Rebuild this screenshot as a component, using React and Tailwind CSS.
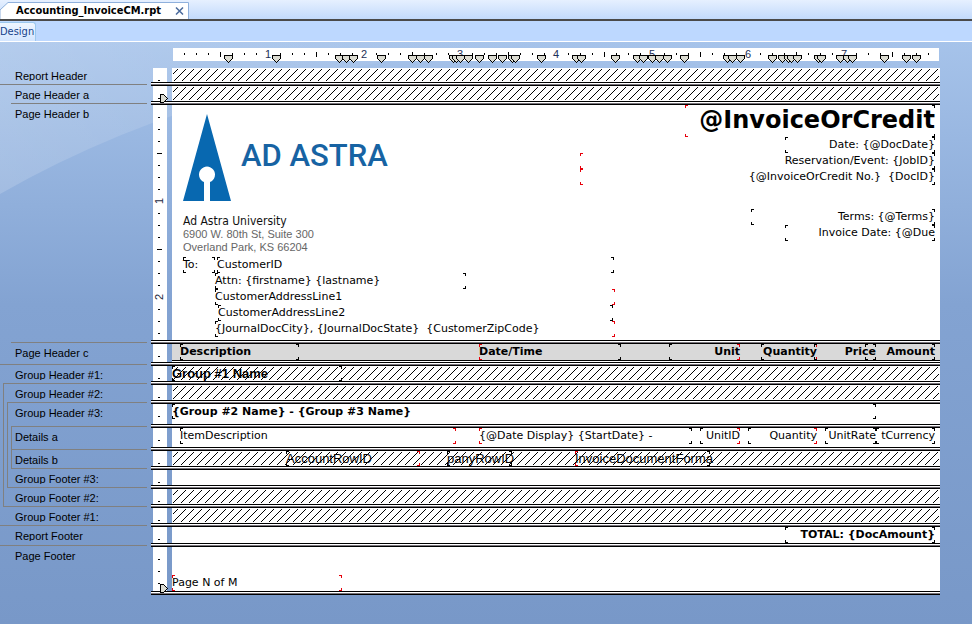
import React from 'react';
import clsx from 'clsx';

const GUIDES = [
  56, 104, 167, 174, 181, 209, 240, 248, 256, 281, 284, 288, 296, 307, 320, 330, 340, 343, 369, 404, 409, 443,
  465, 471, 480, 487, 495, 512, 555, 560, 568, 600, 610, 616, 619, 625, 646, 649, 668, 675, 680, 712, 734, 744,
];

const TopRuler = () => (
  <div className="relative h-[13px] bg-white ml-px mr-px">
    <svg className="absolute top-0 -left-px w-full h-4 overflow-visible" shapeRendering="crispEdges">
      {Array.from({ length: 63 }, (_, i) => i + 1).filter(i => i % 8 !== 0).map(i => (
        <rect key={i} x={i * 12} y={i % 4 === 0 ? 4 : 5} width="1" height={i % 4 === 0 ? 5 : 2} fill="#000" />
      ))}
      {[1, 2, 3, 4, 5, 6, 7].map(n => (
        <text key={n} x={n * 96} y="10" textAnchor="middle" fill="#1c3058" className="text-[11px] font-['Liberation_Sans',sans-serif]">{n}</text>
      ))}
      {GUIDES.map(x => (
        <path key={x} transform={`translate(${x} 7)`} d="M-3.5 .5H4.5V3.5L.5 7.5L-3.5 3.5Z" fill="#dcdcd2" stroke="#000" />
      ))}
    </svg>
  </div>
);

const Ruler = ({ ticks, guide }) => (
  <div className="relative w-[14px] ml-[2px] mr-[5px] bg-white shrink-0">
    <svg className="absolute inset-0 w-full h-full overflow-visible" shapeRendering="crispEdges">
      {Array.from({ length: ticks }, (_, i) => i + 1).map(i => (
        i % 8 === 0
          ? <text key={i} transform={`translate(10 ${i * 12}) rotate(-90)`} textAnchor="middle" fill="#1c2840" className="text-[11px] font-['Liberation_Sans',sans-serif]">{i / 8}</text>
          : <rect key={i} x={i % 4 === 0 ? 4 : 5} y={i * 12} width={i % 4 === 0 ? 5 : 2} height="1" fill="#000" />
      ))}
      {guide && <path transform={`translate(7 ${guide})`} d="M.5 -3.5H3.5L7.5 .5L3.5 4.5H.5Z" fill="#dcdcd2" stroke="#000" />}
    </svg>
  </div>
);

const Hatch = () => (
  <svg className="absolute inset-x-px top-px bottom-px w-[calc(100%-2px)] h-[calc(100%-2px)]" shapeRendering="crispEdges">
    <defs>
      <pattern id="hatch" width="8" height="8" patternUnits="userSpaceOnUse">
        <path fill="#000" d="M0 4h1v1H0zM1 3h1v1H1zM2 2h1v1H2zM3 1h1v1H3zM4 0h1v1H4zM5 7h1v1H5zM6 6h1v1H6zM7 5h1v1H7z" />
      </pattern>
    </defs>
    <rect width="100%" height="100%" fill="url(#hatch)" />
  </svg>
);

// height of the section comes in through className
const Section = ({ className, ticks = 1, guide, hatch, children }) => (
  <>
    <div className={clsx('flex', className)}>
      <Ruler ticks={ticks} guide={guide} />
      <div className="relative flex-1 flex flex-col leading-4 bg-white">
        {hatch && <Hatch />}
        {children}
      </div>
    </div>
    <div className="flex items-end h-1 bg-white border-y border-black">
      <div className="flex-1 h-px bg-[#77737a]" />
    </div>
  </>
);

// report object on the design surface, with its four corner marks
const Field = ({ className, free, red = '', children }) => {
  const l = red.includes('l') ? 'border-red-600' : 'border-black';
  const r = red.includes('r') ? 'border-red-600' : 'border-black';
  return (
    <div className={clsx('whitespace-pre', free ? 'absolute top-0' : 'relative', className)}>
      <i className={clsx('absolute left-0 top-0 size-[3px] border-l border-t', l)} />
      <i className={clsx('absolute left-0 bottom-0 size-[3px] border-l border-b', l)} />
      <i className={clsx('absolute right-0 top-0 size-[3px] border-r border-t', r)} />
      <i className={clsx('absolute right-0 bottom-0 size-[3px] border-r border-b', r)} />
      {children}
    </div>
  );
};

const Label = ({ className, clip, children }) => (
  <div className={className}>
    <div className={clsx('pt-[3px] leading-[14px] whitespace-nowrap overflow-hidden', clip ? 'h-[15px]' : 'h-[18px]')}>{children}</div>
  </div>
);

const Outline = () => (
  <aside className="w-[147px] mr-1 pt-[24px] shrink-0 text-[11px] text-black font-['Liberation_Sans',sans-serif]">
    <Label clip className="h-[19px] pl-[15px] border-b border-[#808080]">Report Header</Label>
    <Label clip className="h-[19px] ml-[11px] pl-1 border-b border-[#808080]">Page Header a</Label>
    <Label className="h-[239px] ml-[11px] pl-1 border-b border-[#808080]">Page Header b</Label>
    <Label className="h-[22px] pl-[15px] border-b border-[#808080]">Page Header c</Label>
    <Label clip className="h-[18px] pl-[15px]">Group Header #1:</Label>
    <div className="ml-[3px] border-l border-y border-[#808080]">
      <Label clip className="h-[18px] pl-[11px]">Group Header #2:</Label>
      <div className="ml-[3px] border-l border-y border-[#808080]">
        <Label clip className="h-[23px] pl-[7px]">Group Header #3:</Label>
        <div className="ml-[3px] border-l border-y border-[#808080]">
          <Label className="h-[23px] pl-[3px] border-b border-[#808080]">Details a</Label>
          <Label className="h-[18px] pl-[3px]">Details b</Label>
        </div>
        <Label clip className="h-[18px] pl-[7px]">Group Footer #3:</Label>
      </div>
      <Label clip className="h-[18px] pl-[11px]">Group Footer #2:</Label>
    </div>
    <Label clip className="h-[19px] pl-[15px] border-b border-[#808080]">Group Footer #1:</Label>
    <Label clip className="h-[20px] pl-[15px] border-b border-[#808080]">Report Footer</Label>
    <Label className="h-[20px] pl-[15px]">Page Footer</Label>
  </aside>
);

const Company = () => (
  <div className="pl-[11px] pt-[9px]">
    <div className="flex items-center h-[88px] gap-[10px]">
      <svg width="48" height="88" viewBox="0 0 48 88">
        <path fill="#0868b0" d="M24 0L48 87H27V68A8 8 0 1 0 21 68V87H0Z" />
      </svg>
      <span className="pb-1 text-[31px] leading-[36px] font-medium text-[#1763a3] font-['Roboto',sans-serif]">AD ASTRA</span>
    </div>
    <div className="mt-[13px] leading-[13px] text-[11px] text-[#666] font-['Liberation_Sans',sans-serif]">
      <p className="text-[12px] text-[#111] font-['DejaVu_Sans_Condensed','DejaVu_Sans',sans-serif]">Ad Astra University</p>
      <p>6900 W. 80th St, Suite 300</p>
      <p>Overland Park, KS 66204</p>
    </div>
  </div>
);

const Customer = () => (
  <div className="flex pt-[3px] pl-[11px]">
    <Field className="w-[32px] h-4">To:</Field>
    <div>
      <Field className="ml-[2px] w-[397px] h-4">CustomerID</Field>
      <Field className="w-[251px] h-4">{'Attn: {firstname} {lastname}'}</Field>
      <Field red="r" className="w-[400px] h-4">CustomerAddressLine1</Field>
      <Field className="ml-[3px] w-[395px] h-4">CustomerAddressLine2</Field>
      <Field red="r" className="w-[400px] h-4">{'{JournalDocCity}, {JournalDocState}  {CustomerZipCode}'}</Field>
    </div>
  </div>
);

const InvoiceInfo = () => (
  <div className="absolute top-0 right-[5px] flex flex-col items-end text-right">
    <Field red="l" className="w-[250px] h-8 font-bold text-[24px] leading-[30px]">@InvoiceOrCredit</Field>
    <Field className="w-[150px] h-4">{'Date: {@DocDate}'}</Field>
    <Field red="l" className="w-[355px] h-4">{'Reservation/Event: {JobID}'}</Field>
    <Field red="l" className="w-[355px] h-4">{'{@InvoiceOrCredit No.}  {DocID}'}</Field>
    <Field className="mt-6 w-[184px] h-4">{'Terms: {@Terms}'}</Field>
    <Field className="w-[150px] h-4">{'Invoice Date: {@Due'}</Field>
  </div>
);

const Swoosh = () => (
  <svg className="absolute inset-0 w-full h-[200px]">
    <defs>
      <linearGradient id="glow" x1="0" y1="0" x2="1" y2="0">
        <stop offset="0" stopColor="#fff" stopOpacity=".16" />
        <stop offset="1" stopColor="#fff" stopOpacity="0" />
      </linearGradient>
    </defs>
    <path fill="url(#glow)" d="M0 0H560Q230 20 0 152Z" />
  </svg>
);

const App = () => (
  <div className="min-h-screen flex flex-col overflow-hidden bg-[#7a9aca] font-['DejaVu_Sans',sans-serif] text-[11px] text-black">
    <div className="h-[19px] flex items-end bg-linear-to-b from-[#e6f0ff] to-[#c2dafc]">
      <div className="relative h-[17px] w-[189px] flex items-center pl-4 pr-[5px] justify-between">
        <svg className="absolute inset-0 w-full h-full">
          <path d="M0 17V8L8 .5H188.500V17" fill="#fff" stroke="#8fb0dc" />
        </svg>
        <button className="relative font-bold leading-[14px] whitespace-nowrap font-['DejaVu_Sans_Condensed','DejaVu_Sans',sans-serif]">Accounting_InvoiceCM.rpt</button>
        <button aria-label="Close" className="relative">
          <svg width="9" height="8" viewBox="0 0 9 8" fill="none" stroke="#4a6a9c" strokeWidth="1.5"><path d="M1 .5L8 7.5M8 .5L1 7.5" /></svg>
        </button>
      </div>
    </div>
    <div className="h-[23px] flex items-start pt-px border-t-2 border-t-[#4a4a4a] border-b border-b-white bg-[#bdd8ff]">
      <button className="h-[19px] w-[36px] text-left leading-4 text-[#15428b] bg-linear-to-b from-[#eef5ff] to-[#d4e6ff] border-r border-t border-[#9cc8ee] rounded-tr-[3px] font-['DejaVu_Sans_Condensed','DejaVu_Sans',sans-serif]">Design</button>
    </div>

    <main className="relative flex-1 flex bg-linear-to-b from-[#a6c3ea] via-[#83a3d2] via-45% to-[#7898c8]">
      <Swoosh />
      <div className="relative flex flex-1">
        <Outline />
        <div className="flex-1 mr-8 pb-[30px]">
          <div className="pt-[6px] pb-[7px] pl-[21px]"><TopRuler /></div>
          <Section className="h-[14px]" hatch />
          <Section className="h-[15px]" hatch guide={12} />

          <Section className="h-[235px]" ticks={19}>
            <Company />
            <Customer />
            <InvoiceInfo />
          </Section>

          <Section className="h-[18px]">
            <div className="h-[17px] bg-[#d9d9d9] border-b border-black font-bold">
              <Field free className="left-[8px] w-[119px] h-4">Description</Field>
              <Field free red="l" className="left-[307px] w-[142px] h-4">Date/Time</Field>
              <Field free red="r" className="left-[497px] right-[200px] h-4 text-right">Unit</Field>
              <Field free red="r" className="left-[589px] right-[123px] h-4 text-right">Quantity</Field>
              <Field free className="left-[642px] right-[64px] h-4 text-right">Price</Field>
              <Field free className="left-[693px] right-[5px] h-4 text-right">Amount</Field>
            </div>
          </Section>

          <Section className="h-[15px]" hatch>
            <Field className="w-[170px] h-[15px] font-bold text-[13px] font-['Liberation_Sans',sans-serif]">Group #1 Name</Field>
          </Section>
          <Section className="h-[15px]" hatch />
          <Section className="h-[20px]">
            <Field className="mr-16 h-[15px] font-bold">{'{Group #2 Name} - {Group #3 Name}'}</Field>
          </Section>

          <Section className="h-[19px]">
            <Field free red="r" className="left-[8px] w-[276px] h-4">ItemDescription</Field>
            <Field free red="l" className="left-[307px] w-[213px] h-4">{'{@Date Display} {StartDate} -'}</Field>
            <Field free red="r" className="left-[528px] right-[200px] h-4 text-right">UnitID</Field>
            <Field free red="r" className="left-[576px] right-[123px] h-4 text-right">Quantity</Field>
            <Field free className="left-[653px] right-[64px] h-4 text-right">UnitRate</Field>
            <Field free className="left-[704px] right-[5px] h-4 text-right">tCurrency</Field>
          </Section>

          <Section className="h-[15px]" hatch>
            <div className="text-[13px] font-['Liberation_Sans',sans-serif]">
              <Field free red="r" className="left-[114px] w-[134px] h-[15px]">AccountRowID</Field>
              <Field free className="left-[275px] w-[65px] h-[15px]">panyRowID</Field>
              <Field free red="l" className="left-[403px] w-[135px] h-[15px]">InvoiceDocumentForma</Field>
            </div>
          </Section>

          <Section className="h-[15px]" />
          <Section className="h-[15px]" hatch />
          <Section className="h-[15px]" hatch />
          <Section className="h-[16px]">
            <Field className="self-end mr-[5px] w-[150px] h-4 text-right font-bold">{'TOTAL: {DocAmount}'}</Field>
          </Section>
          <Section className="h-[44px]" ticks={3} guide={41}>
            <Field red="lr" className="mt-auto w-[170px] h-4">Page N of M</Field>
          </Section>
        </div>
      </div>
    </main>
  </div>
);

export default App;
